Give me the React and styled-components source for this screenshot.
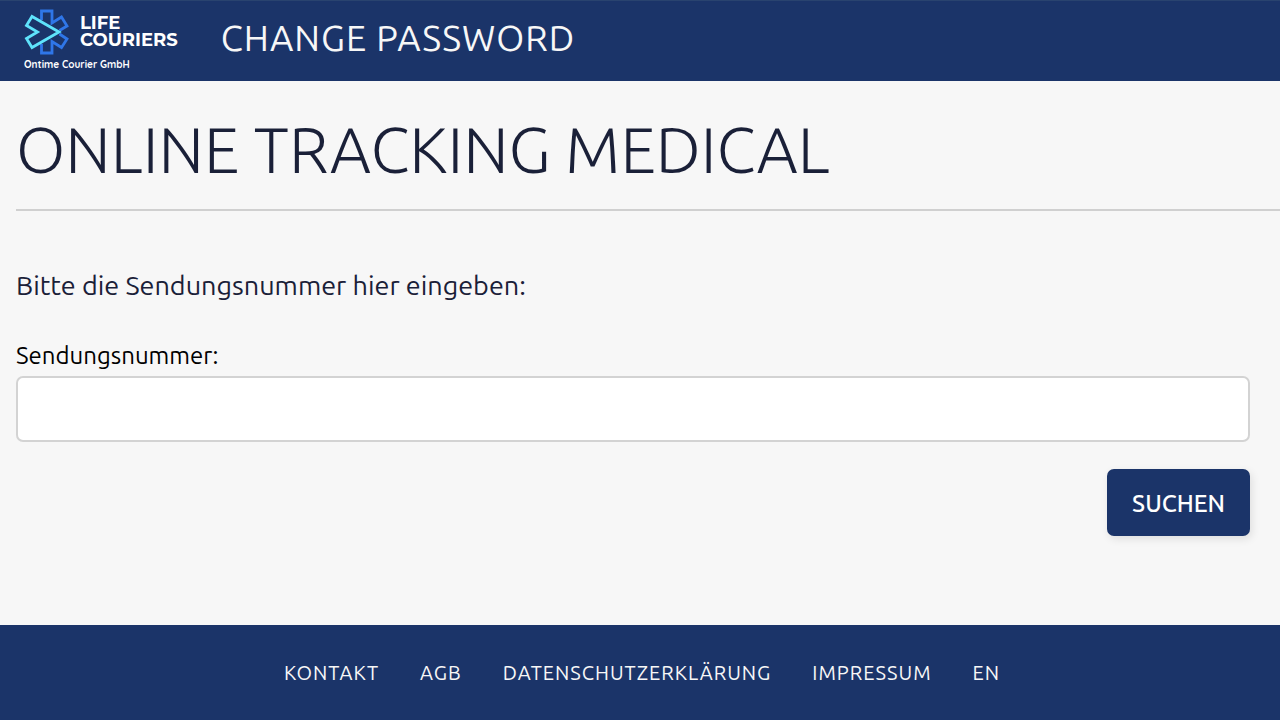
import styled, { createGlobalStyle } from "styled-components";
import { useState } from "react";

const links = ["Kontakt", "AGB", "Datenschutzerklärung", "Impressum", "EN"];

export default function App() {
  const [nummer, setNummer] = useState("");

  return (
    <Seite>
      <GlobalStyle />
      <Kopf>
        <Logo href="#" aria-label="Life Couriers">
          <Marke>
            <Stern />
            <Wortmarke>
              <span>LIFE</span>
              <span>COURIERS</span>
            </Wortmarke>
          </Marke>
          <Firma>Ontime Courier GmbH</Firma>
        </Logo>
        <KopfLink href="#">Change Password</KopfLink>
      </Kopf>

      <Inhalt>
        <Titel>ONLINE TRACKING MEDICAL</Titel>
        <Linie />
        <Formular onSubmit={(e) => e.preventDefault()}>
          <Hinweis>Bitte die Sendungsnummer hier eingeben:</Hinweis>
          <Beschriftung htmlFor="sendungsnummer">Sendungsnummer:</Beschriftung>
          <Eingabe
            id="sendungsnummer"
            type="text"
            value={nummer}
            onChange={(e) => setNummer(e.target.value)}
          />
          <Knopf type="submit">Suchen</Knopf>
        </Formular>
      </Inhalt>

      <Fuss>
        {links.map((name) => (
          <FussLink key={name} href="#">
            {name}
          </FussLink>
        ))}
      </Fuss>
    </Seite>
  );
}

function Stern() {
  return (
    <svg width="46" height="46" viewBox="0 0 46 46" fill="none" strokeWidth="2.8">
      <path
        stroke="#2f76e8"
        d="M17.5 11V2H28v12l9.500-6 5.500 9-7.500 4.500M35.500 25l7.500 5-5.500 8.500-9.500-6v11.500H17.500V35"
      />
      <path
        stroke="#5fe3fb"
        d="M35 23 8 7.500 2.500 16.500 13.500 23 2.500 29.500 8 38.500Z"
      />
    </svg>
  );
}

const GlobalStyle = createGlobalStyle`
  * {
    box-sizing: border-box;
  }

  body {
    margin: 0;
    background-color: #f7f7f7;
    font-family: Ubuntu, "Noto Sans", sans-serif;
    color: #1a2038;
  }
`;

const Seite = styled.div`
  display: flex;
  flex-direction: column;
  min-height: 100vh;
`;

const Kopf = styled.header`
  display: flex;
  align-items: flex-start;
  gap: 43px;
  padding: 8px 24px;
  height: 81px;
  background-color: #1b3469;
  border-top: 1px solid #29436f;
`;

const Logo = styled.a`
  display: flex;
  flex-direction: column;
  gap: 2px;
  color: white;
  text-decoration: none;
  font-family: Montserrat, Lato, sans-serif;
`;

const Marke = styled.span`
  display: flex;
  align-items: center;
  gap: 10px;
`;

const Wortmarke = styled.span`
  display: flex;
  flex-direction: column;
  font-size: 18px;
  font-weight: 700;
  line-height: 17px;
`;

const Firma = styled.span`
  font-family: Quicksand, Lato, sans-serif;
  font-size: 10px;
  font-weight: 700;
  line-height: 16px;
`;

const KopfLink = styled.a`
  color: #f7f7f7;
  font-size: 36px;
  line-height: 58px;
  letter-spacing: 1px;
  text-transform: uppercase;
  text-decoration: none;
`;

const Inhalt = styled.main`
  flex: 1;
  padding-left: 16px;
`;

const Titel = styled.h1`
  margin: 0;
  padding: 28px 0 20px;
  font-size: 64px;
  font-weight: 300;
  line-height: 80px;
`;

const Linie = styled.hr`
  margin: 0;
  border: none;
  border-top: 2px solid #d0d0d0;
`;

const Formular = styled.form`
  display: flex;
  flex-direction: column;
  padding: 54px 30px 88px 0;
`;

const Hinweis = styled.p`
  margin: 0 0 35px;
  font-size: 27px;
  line-height: 40px;
`;

const Beschriftung = styled.label`
  margin-bottom: 4px;
  color: black;
  font-size: 24px;
  line-height: 32px;
`;

const Eingabe = styled.input`
  height: 66px;
  padding: 0 16px;
  border: 2px solid #d3d3d3;
  border-radius: 7px;
  background-color: white;
  font: inherit;
  font-size: 24px;
`;

const Knopf = styled.button`
  align-self: flex-end;
  height: 67px;
  margin-top: 27px;
  padding: 2px 25px 0;
  border: none;
  border-radius: 7px;
  background-color: #1b3469;
  box-shadow: 2px 3px 8px rgba(0, 0, 0, 0.1);
  color: white;
  font: inherit;
  font-size: 24px;
  font-weight: 500;
  text-transform: uppercase;
  cursor: pointer;
`;

const Fuss = styled.footer`
  display: flex;
  justify-content: center;
  gap: 41px;
  padding: 32px 16px 31px 20px;
  background-color: #1b3469;
`;

const FussLink = styled.a`
  color: #f7f7f7;
  font-size: 20px;
  line-height: 32px;
  letter-spacing: 1px;
  text-transform: uppercase;
  text-decoration: none;
`;
